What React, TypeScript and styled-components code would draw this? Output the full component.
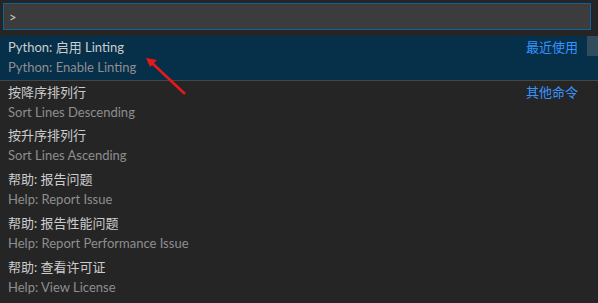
import React from "react";
import styled, { createGlobalStyle } from "styled-components";

const Global = createGlobalStyle`
  html, body { margin: 0; padding: 0; background: #252526; }
  body { font-family: Lato, "Noto Sans CJK SC", sans-serif; }
`;

const Palette = styled.div`
  position: relative;
  width: 598px;
  height: 303px;
  overflow: hidden;
  background: #252526;
  font-size: 13px;
`;

const InputWrap = styled.div`
  padding: 3px 7px 6px 3px;
`;

const Input = styled.div`
  box-sizing: border-box;
  height: 27px;
  background: #3c3c3c;
  border: 1px solid #0e639c;
  color: #cccccc;
  display: flex;
  align-items: center;
  padding-left: 5px;
  font-size: 13px;
`;

const List = styled.div`
  display: flex;
  flex-direction: column;
`;

const Row = styled.div<{ $selected?: boolean; $separator?: boolean }>`
  box-sizing: border-box;
  height: 44px;
  padding: 1px 20px 0 8px;
  display: flex;
  justify-content: space-between;
  background: ${(p) => (p.$selected ? "#062f4a" : "transparent")};
  border-top: ${(p) => (p.$separator ? "1px solid #454545" : "none")};
`;

const Texts = styled.div`
  display: flex;
  flex-direction: column;
`;

const Label = styled.div`
  color: #cccccc;
  line-height: 20px;
  height: 20px;
`;

const Desc = styled.div`
  color: #8e8e8e;
  line-height: 20px;
  height: 20px;
`;

const Group = styled.div`
  color: #3794ff;
  line-height: 20px;
  height: 20px;
`;

const Slider = styled.div`
  position: absolute;
  right: 0;
  top: 36px;
  width: 11px;
  height: 20px;
  background: rgba(121, 121, 121, 0.4);
`;

const Arrow = styled.svg`
  position: absolute;
  left: 0;
  top: 0;
  pointer-events: none;
`;

const items = [
  { label: "Python: 启用 Linting", desc: "Python: Enable Linting", group: "最近使用", selected: true },
  { label: "按降序排列行", desc: "Sort Lines Descending", group: "其他命令", separator: true },
  { label: "按升序排列行", desc: "Sort Lines Ascending" },
  { label: "帮助: 报告问题", desc: "Help: Report Issue" },
  { label: "帮助: 报告性能问题", desc: "Help: Report Performance Issue" },
  { label: "帮助: 查看许可证", desc: "Help: View License" },
];

export default function App() {
  return (
    <Palette>
      <Global />
      <InputWrap>
        <Input>&gt;</Input>
      </InputWrap>
      <List>
        {items.map((it, i) => (
          <Row key={i} $selected={it.selected} $separator={it.separator}>
            <Texts>
              <Label>{it.label}</Label>
              <Desc>{it.desc}</Desc>
            </Texts>
            {it.group && <Group>{it.group}</Group>}
          </Row>
        ))}
      </List>
      <Slider />
      <Arrow width="598" height="303" viewBox="0 0 598 303">
        <line x1="185" y1="94" x2="152" y2="63" stroke="#e81818" strokeWidth="2.5" />
        <polygon points="146,58 157,60 150,67" fill="#e81818" />
      </Arrow>
    </Palette>
  );
}
